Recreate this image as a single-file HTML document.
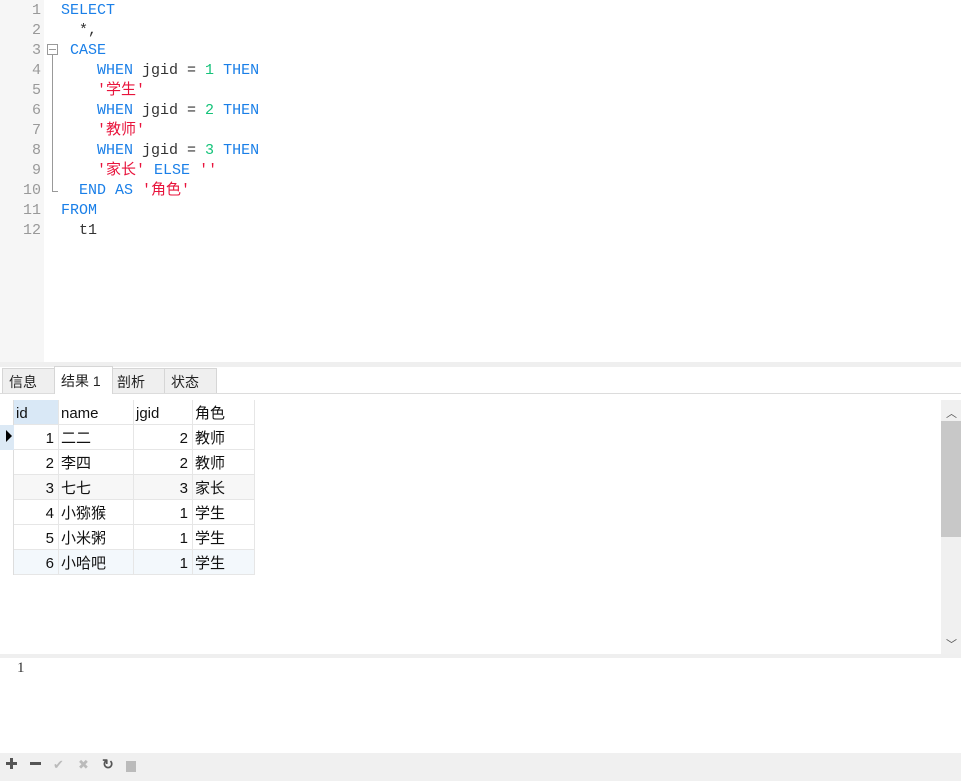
<!DOCTYPE html>
<html><head><meta charset="utf-8"><style>
*{margin:0;padding:0;box-sizing:border-box}
body{width:961px;height:781px;overflow:hidden;background:#fff;position:relative;font-family:"Liberation Sans","Noto Sans CJK SC",sans-serif}
.gut{position:absolute;left:0;top:0;width:44px;height:362px;background:#f6f6f6}
.code{position:absolute;left:0;top:0;font-family:"Liberation Mono","Noto Sans CJK SC",monospace;font-size:15px;line-height:20px}
.ln{position:absolute;left:0;width:41px;text-align:right;color:#999}
.cl{position:absolute;left:61px;white-space:pre;color:#333}
.k{color:#1a7fe8}.s{color:#e8143c}.n{color:#15c37a}
.abs{position:absolute}
.tab{position:absolute;top:368px;height:25px;background:#efefef;border:1px solid #d6d6d6;border-bottom:none;font-size:14px;padding:3px 0 0 6px;color:#222}
.c{position:absolute;height:25px;border-right:1px solid #e6e6e6;border-bottom:1px solid #e6e6e6;font-size:15px;line-height:27px;padding:0 2px;color:#111;overflow:hidden}
.r{text-align:right;padding-right:4px}
</style></head><body>
<div class="gut"></div>
<div class="code">
<div class="ln" style="top:1px">1</div><div class="ln" style="top:21px">2</div><div class="ln" style="top:41px">3</div><div class="ln" style="top:61px">4</div><div class="ln" style="top:81px">5</div><div class="ln" style="top:101px">6</div><div class="ln" style="top:121px">7</div><div class="ln" style="top:141px">8</div><div class="ln" style="top:161px">9</div><div class="ln" style="top:181px">10</div><div class="ln" style="top:201px">11</div><div class="ln" style="top:221px">12</div>
<div class="cl" style="top:1px"><span class="k">SELECT</span></div>
<div class="cl" style="top:21px">  *,</div>
<div class="cl" style="top:41px"> <span class="k">CASE</span></div>
<div class="cl" style="top:61px">    <span class="k">WHEN</span> jgid = <span class="n">1</span> <span class="k">THEN</span></div>
<div class="cl" style="top:81px">    <span class="s">'学生'</span></div>
<div class="cl" style="top:101px">    <span class="k">WHEN</span> jgid = <span class="n">2</span> <span class="k">THEN</span></div>
<div class="cl" style="top:121px">    <span class="s">'教师'</span></div>
<div class="cl" style="top:141px">    <span class="k">WHEN</span> jgid = <span class="n">3</span> <span class="k">THEN</span></div>
<div class="cl" style="top:161px">    <span class="s">'家长'</span> <span class="k">ELSE</span> <span class="s">''</span></div>
<div class="cl" style="top:181px">  <span class="k">END AS</span> <span class="s">'角色'</span></div>
<div class="cl" style="top:201px"><span class="k">FROM</span></div>
<div class="cl" style="top:221px">  t1</div>
</div>
<div class="abs" style="left:47px;top:44px;width:11px;height:11px;border:1px solid #999"></div>
<div class="abs" style="left:49px;top:49px;width:7px;height:1px;background:#999"></div>
<div class="abs" style="left:52px;top:55px;width:1px;height:136px;background:#999"></div>
<div class="abs" style="left:52px;top:191px;width:6px;height:1px;background:#999"></div>
<div class="abs" style="left:0;top:362px;width:961px;height:5px;background:#efefef"></div>
<div class="abs" style="left:0;top:393px;width:961px;height:1px;background:#dcdcdc"></div>
<div class="tab" style="left:2px;width:53px">信息</div>
<div class="tab" style="left:54px;width:59px;top:366px;height:28px;background:#fff;padding-top:4px">结果 1</div>
<div class="tab" style="left:112px;width:53px;padding-left:4px">剖析</div>
<div class="tab" style="left:164px;width:53px;padding-left:6px">状态</div>
<div class="abs" style="left:0;top:400px;width:14px;height:175px;border-right:1px solid #ddd"></div>
<div class="abs" style="left:0;top:425px;width:14px;height:25px;background:#dce9f5"></div>
<div class="abs" style="left:6px;top:430px;width:0;height:0;border-left:6px solid #000;border-top:6px solid transparent;border-bottom:6px solid transparent"></div>
<div class="c" style="left:14px;top:400px;width:45px;background:#d9e8f6">id</div>
<div class="c" style="left:59px;top:400px;width:75px">name</div>
<div class="c" style="left:134px;top:400px;width:59px">jgid</div>
<div class="c" style="left:193px;top:400px;width:62px">角色</div>
<div id="rows"></div>
<div class="abs" style="left:941px;top:400px;width:20px;height:255px;background:#f0f0f0"></div>
<div class="abs" style="left:941px;top:421px;width:20px;height:116px;background:#c8c8c8"></div>
<div class="abs" style="left:946px;top:405px;font-size:11px;color:#555">︿</div>
<div class="abs" style="left:946px;top:636px;font-size:11px;color:#555">﹀</div>
<div class="abs" style="left:0;top:654px;width:961px;height:4px;background:#efefef"></div>
<div class="abs" style="left:17px;top:660px;font-family:'Liberation Serif',serif;font-size:15px;color:#333">1</div>
<div class="abs" style="left:0;top:753px;width:961px;height:28px;background:#f0f0f0"></div>
<div class="abs" style="left:6px;top:762px;width:11px;height:3px;background:#555"></div>
<div class="abs" style="left:10px;top:758px;width:3px;height:11px;background:#555"></div>
<div class="abs" style="left:30px;top:762px;width:11px;height:3px;background:#555"></div>
<div class="abs" style="left:53px;top:757px;font-size:13px;color:#bbb">✔</div>
<div class="abs" style="left:78px;top:757px;font-size:13px;color:#bbb">✖</div>
<div class="abs" style="left:102px;top:756px;font-size:14px;font-weight:bold;color:#555">↻</div>
<div class="abs" style="left:126px;top:761px;width:10px;height:11px;background:#bbb"></div>
<script>
var d=[["1","二二","2","教师"],["2","李四","2","教师"],["3","七七","3","家长"],["4","小猕猴","1","学生"],["5","小米粥","1","学生"],["6","小哈吧","1","学生"]];
var h="";d.forEach(function(r,i){var t=425+i*25;var bg=i==2?"#f7f7f7":i==5?"#f3f8fc":"#fff";
h+='<div class="c r" style="left:14px;top:'+t+'px;width:45px;background:'+bg+'">'+r[0]+'</div>';
h+='<div class="c" style="left:59px;top:'+t+'px;width:75px;background:'+bg+'">'+r[1]+'</div>';
h+='<div class="c r" style="left:134px;top:'+t+'px;width:59px;background:'+bg+'">'+r[2]+'</div>';
h+='<div class="c" style="left:193px;top:'+t+'px;width:62px;background:'+bg+'">'+r[3]+'</div>';});
document.getElementById("rows").innerHTML=h;
</script>
</body></html>
